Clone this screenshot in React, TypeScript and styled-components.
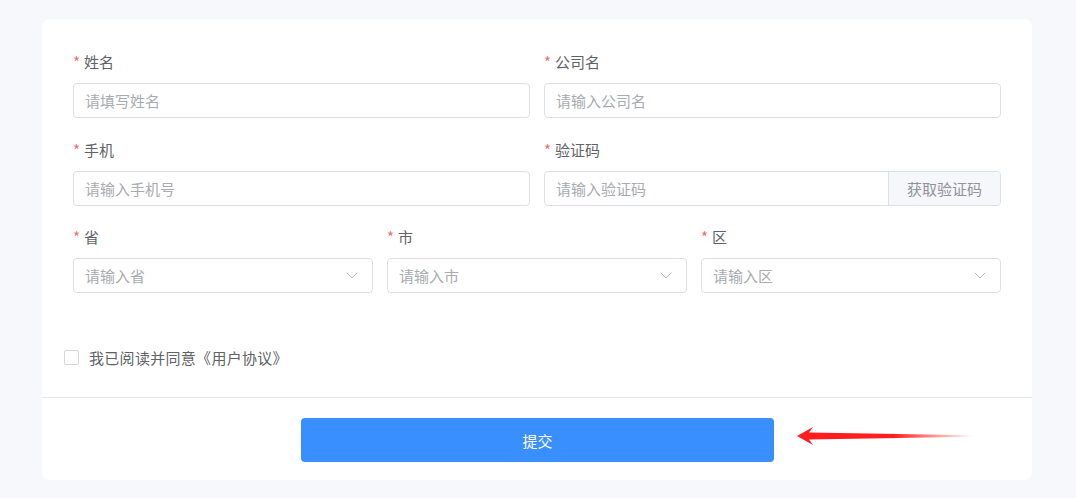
import React, { useState } from "react";
import styled, { createGlobalStyle } from "styled-components";

const GlobalStyle = createGlobalStyle`
  body {
    margin: 0;
    background: #f7f8fb;
    font-family: "Noto Sans CJK SC", "Noto Sans", sans-serif;
  }
`;

function Chevron() {
  return (
    <svg width="12" height="7" viewBox="0 0 12 7" fill="none">
      <path d="M0.7 0.7 L6 6 L11.3 0.7" stroke="#b4b7bd" strokeWidth="1" />
    </svg>
  );
}

function PointerArrow() {
  return (
    <ArrowSvg width="180" height="20" viewBox="0 0 180 20">
      <defs>
        <linearGradient id="arrowFade" x1="0" x2="1" y1="0" y2="0">
          <stop offset="0" stopColor="#ff1d1d" stopOpacity="1" />
          <stop offset="0.55" stopColor="#ff1d1d" stopOpacity="1" />
          <stop offset="1" stopColor="#ff1d1d" stopOpacity="0" />
        </linearGradient>
      </defs>
      <polygon
        points="2,10 18,1 14,6.5 177,9.2 177,10.8 14,13.5 18,19"
        fill="url(#arrowFade)"
      />
    </ArrowSvg>
  );
}

type FieldProps = {
  label: string;
  placeholder: string;
  select?: boolean;
  addon?: string;
};

function Field({ label, placeholder, select, addon }: FieldProps) {
  return (
    <FieldBox>
      <Label>
        <Star>*</Star>
        {label}
      </Label>
      <Control>
        <Input placeholder={placeholder} readOnly={select} />
        {select && (
          <Suffix>
            <Chevron />
          </Suffix>
        )}
        {addon && <Addon>{addon}</Addon>}
      </Control>
    </FieldBox>
  );
}

export default function App() {
  const [agreed, setAgreed] = useState(false);
  return (
    <>
      <GlobalStyle />
      <Page>
        <Card>
          <FormBody>
            <Row cols={2}>
              <Field label="姓名" placeholder="请填写姓名" />
              <Field label="公司名" placeholder="请输入公司名" />
            </Row>
            <Row cols={2}>
              <Field label="手机" placeholder="请输入手机号" />
              <Field label="验证码" placeholder="请输入验证码" addon="获取验证码" />
            </Row>
            <Row cols={3}>
              <Field label="省" placeholder="请输入省" select />
              <Field label="市" placeholder="请输入市" select />
              <Field label="区" placeholder="请输入区" select />
            </Row>
          </FormBody>
          <Agreement onClick={() => setAgreed(!agreed)}>
            <CheckBox checked={agreed} />
            <span>我已阅读并同意《用户协议》</span>
          </Agreement>
          <Divider />
          <Footer>
            <SubmitButton>提交</SubmitButton>
            <PointerArrow />
          </Footer>
        </Card>
      </Page>
    </>
  );
}

const Page = styled.div`
  padding: 19px 44px 18px 42px;
`;

const Card = styled.div`
  width: 990px;
  background: #fff;
  border-radius: 8px;
`;

const FormBody = styled.div`
  padding: 33px 31px 0;
  display: flex;
  flex-direction: column;
  gap: 21.5px;
`;

const Row = styled.div<{ cols: number }>`
  display: grid;
  grid-template-columns: repeat(${props => props.cols}, 1fr);
  column-gap: 14px;
`;

const FieldBox = styled.div`
  display: flex;
  flex-direction: column;
`;

const Label = styled.label`
  font-size: 15px;
  line-height: 20px;
  color: #606266;
  margin-bottom: 11px;
`;

const Star = styled.span`
  color: #f56c6c;
  margin-right: 4px;
`;

const Control = styled.div`
  position: relative;
  display: flex;
  height: 35px;
  border: 1px solid #dcdfe6;
  border-radius: 4px;
  box-sizing: border-box;
  overflow: hidden;
  background: #fff;
`;

const Input = styled.input`
  flex: 1;
  min-width: 0;
  border: none;
  outline: none;
  padding: 0 11px;
  font-family: inherit;
  font-size: 15px;
  color: #606266;
  background: transparent;
  &::placeholder {
    color: #a8abb2;
  }
`;

const Suffix = styled.span`
  display: flex;
  align-items: center;
  padding-right: 14px;
`;

const Addon = styled.span`
  display: flex;
  align-items: center;
  padding: 0 18px;
  width: 112px;
  box-sizing: border-box;
  background: #f5f7fa;
  border-left: 1px solid #dcdfe6;
  color: #909399;
  font-size: 15px;
`;

const Agreement = styled.div`
  display: flex;
  align-items: center;
  gap: 10px;
  height: 20px;
  margin: 54px 0 30px 22px;
  font-size: 15px;
  letter-spacing: 0.3px;
  color: #606266;
  cursor: pointer;
`;

const CheckBox = styled.span<{ checked: boolean }>`
  width: 15px;
  height: 15px;
  box-sizing: border-box;
  border: 1px solid #d4d7de;
  border-radius: 2px;
  background: ${props => (props.checked ? "#3a8ffe" : "#fff")};
`;

const Divider = styled.div`
  height: 1px;
  background: #e4e7ed;
`;

const Footer = styled.div`
  position: relative;
  display: flex;
  justify-content: center;
  padding: 20px 0 18px;
`;

const SubmitButton = styled.button`
  width: 473px;
  height: 44px;
  margin-left: 1px;
  border: none;
  border-radius: 4px;
  background: #3a8ffe;
  color: #fff;
  font-family: inherit;
  font-size: 15px;
  cursor: pointer;
`;

const ArrowSvg = styled.svg`
  position: absolute;
  left: 753px;
  top: 28px;
`;
